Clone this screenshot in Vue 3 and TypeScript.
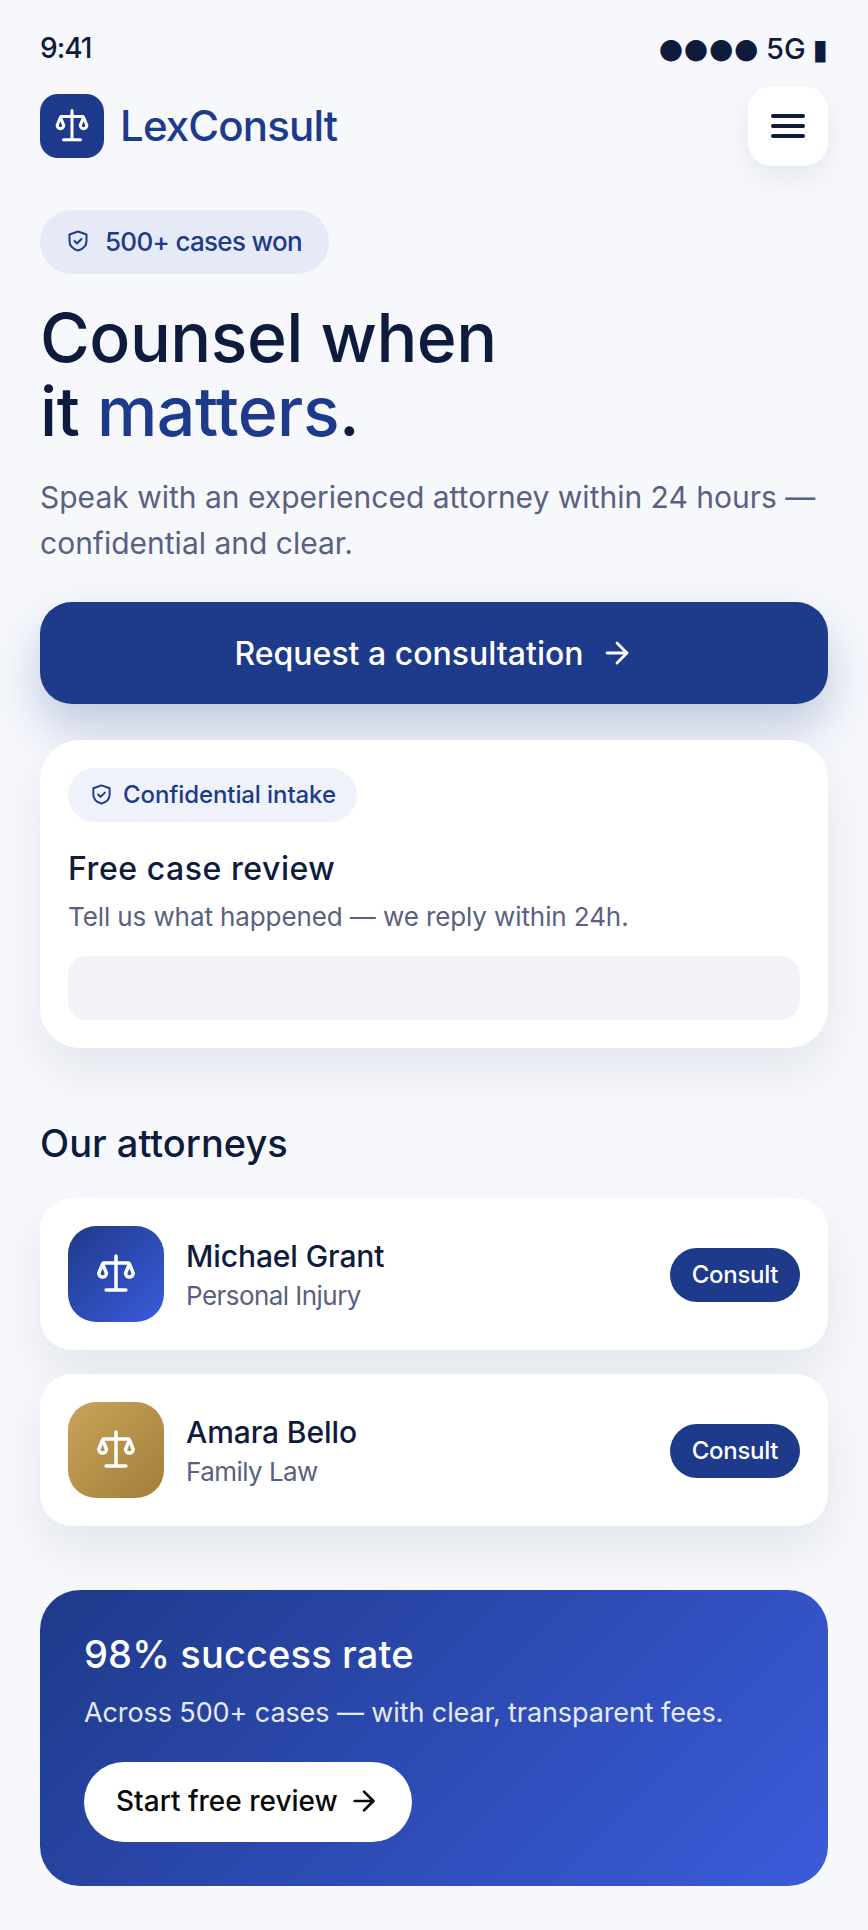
<script setup lang="ts">
interface Attorney {
  name: string
  area: string
  tone: string
}

const attorneys: Attorney[] = [
  { name: 'Michael Grant', area: 'Personal Injury', tone: 'blue' },
  { name: 'Amara Bello', area: 'Family Law', tone: 'gold' },
]

const scalePath =
  'M12 2.2v18.5M6.6 20.7h10.8M5 6h14M4.7 6.5 2.6 11.6a2.1 2.1 0 0 0 4.2 0ZM19.3 6.5l-2.1 5.1a2.1 2.1 0 0 0 4.2 0Z'
const shieldPath = 'M12 2.5 20.5 5.5V12c0 5-3.5 8-8.5 9.5C7 20 3.5 17 3.5 12V5.5Z'
</script>

<template>
  <div class="page">
    <div class="status">
      <span class="time">9:41</span>
      <span class="signal"><span class="dots">●●●●</span><span class="net">5G</span><span class="batt">▮</span></span>
    </div>

    <header class="top">
      <div class="brand">
        <span class="logo">
          <svg class="scale" width="38" height="38" viewBox="0 0 24 24"><path :d="scalePath" /></svg>
        </span>
        <span class="brand-name">LexConsult</span>
      </div>
      <button class="menu"><span></span><span></span><span></span></button>
    </header>

    <div class="badge">
      <svg class="shield" width="24" height="24" viewBox="0 0 24 24"><path :d="shieldPath" /><path d="m8.5 12 2.5 2.5 4.5-4.5" /></svg>
      500+ cases won
    </div>

    <h1>Counsel when<br />it <em>matters</em>.</h1>
    <p class="lead">Speak with an experienced attorney within 24 hours — confidential and clear.</p>

    <button class="cta">
      Request a consultation
      <svg class="arrow" width="34" height="34" viewBox="0 0 24 24"><path d="M5 12h14" /><path d="m12 5 7 7-7 7" /></svg>
    </button>

    <section class="card review">
      <div class="tag">
        <svg class="shield" width="23" height="23" viewBox="0 0 24 24"><path :d="shieldPath" /><path d="m8.5 12 2.5 2.5 4.5-4.5" /></svg>
        Confidential intake
      </div>
      <h3>Free case review</h3>
      <p>Tell us what happened — we reply within 24h.</p>
      <div class="field"></div>
    </section>

    <h2>Our attorneys</h2>

    <div class="list">
      <div v-for="a in attorneys" :key="a.name" class="card row">
        <span class="avatar" :class="a.tone">
          <svg class="scale" width="44" height="44" viewBox="0 0 24 24"><path :d="scalePath" /></svg>
        </span>
        <div class="who">
          <div class="name">{{ a.name }}</div>
          <div class="area">{{ a.area }}</div>
        </div>
        <button class="consult">Consult</button>
      </div>
    </div>

    <section class="promo">
      <h3>98% success rate</h3>
      <p>Across 500+ cases — with clear, transparent fees.</p>
      <button class="start">
        Start free review
        <svg class="arrow" width="32" height="32" viewBox="0 0 24 24"><path d="M5 12h14" /><path d="m12 5 7 7-7 7" /></svg>
      </button>
    </section>
  </div>
</template>

<style>
body {
  background: #f6f8fc;
}
</style>

<style scoped>
.page {
  box-sizing: border-box;
  width: 868px;
  height: 1930px;
  padding: 27px 40px 0;
  background: #f6f8fc;
  color: #0f1b3d;
  font-family: Inter, "DejaVu Sans", sans-serif;
  overflow: hidden;
}

button {
  border: 0;
  font-family: inherit;
}

.status {
  display: flex;
  justify-content: space-between;
  align-items: center;
  height: 42px;
  font-size: 28px;
  line-height: 42px;
  font-weight: 500;
}

.time {
  letter-spacing: -1px;
}

.signal {
  display: flex;
  align-items: center;
  gap: 7px;
  font-size: 29px;
}

.dots,
.batt {
  font-family: "DejaVu Sans", sans-serif;
  font-size: 28px;
}

.dots {
  margin-top: 2px;
  letter-spacing: 0.6px;
}

.batt {
  margin-top: 4px;
}

.net {
  margin-top: 2px;
}

.top {
  display: flex;
  justify-content: space-between;
  align-items: center;
  margin-top: 17px;
}

.brand {
  display: flex;
  align-items: center;
  gap: 16px;
}

.logo {
  display: flex;
  align-items: center;
  justify-content: center;
  width: 64px;
  height: 64px;
  border-radius: 18px;
  background: #1e3a8a;
}

.scale {
  fill: none;
  stroke: #fff;
  stroke-width: 1.9;
  stroke-linecap: round;
  stroke-linejoin: round;
}

.brand-name {
  padding-bottom: 2px;
  color: #1e3a8a;
  font-size: 42px;
  font-weight: 500;
  letter-spacing: -0.85px;
}

.menu {
  display: flex;
  flex-direction: column;
  align-items: center;
  justify-content: center;
  gap: 6px;
  width: 80px;
  height: 80px;
  border-radius: 24px;
  background: #fff;
  box-shadow: 0 12px 28px rgba(15, 27, 61, 0.07);
}

.menu span {
  width: 34px;
  height: 4px;
  border-radius: 2px;
  background: #0f1b3d;
}

.badge {
  display: inline-flex;
  align-items: center;
  gap: 15px;
  box-sizing: border-box;
  height: 64px;
  margin-top: 44px;
  padding: 0 27px 2px 26px;
  border-radius: 32px;
  background: #e6eaf7;
  color: #1e3a8a;
  font-size: 26px;
  font-weight: 500;
  letter-spacing: -0.7px;
}

.shield {
  fill: none;
  stroke: #1e3a8a;
  stroke-width: 2;
  stroke-linecap: round;
  stroke-linejoin: round;
}

h1 {
  margin: 26px 0 0;
  font-size: 68px;
  line-height: 74px;
  font-weight: 550;
  letter-spacing: -0.5px;
}

h1 em {
  color: #1e3a8a;
  font-style: normal;
}

.lead {
  margin: 26px 0 0;
  color: #5a6080;
  font-size: 30px;
  line-height: 46px;
}

.cta {
  display: flex;
  align-items: center;
  justify-content: center;
  gap: 16px;
  width: 100%;
  height: 102px;
  margin-top: 36px;
  border-radius: 32px;
  background: #1e3a8a;
  color: #fff;
  font-size: 32px;
  font-weight: 500;
  box-shadow: 0 24px 48px rgba(30, 58, 138, 0.25);
}

.arrow {
  fill: none;
  stroke: currentColor;
  stroke-width: 2;
  stroke-linecap: round;
  stroke-linejoin: round;
}

.card {
  background: #fff;
  box-shadow: 0 24px 48px rgba(15, 27, 61, 0.08);
}

.review {
  box-sizing: border-box;
  height: 308px;
  margin-top: 36px;
  padding: 28px;
  border-radius: 40px;
}

.tag {
  display: inline-flex;
  align-items: center;
  gap: 10px;
  box-sizing: border-box;
  height: 54px;
  padding: 0 21px 2px 22px;
  border-radius: 27px;
  background: #eff2fb;
  color: #1e3a8a;
  font-size: 24px;
  font-weight: 500;
  letter-spacing: -0.1px;
}

.review h3 {
  margin: 25px 0 0;
  font-size: 32px;
  line-height: 44px;
  font-weight: 500;
  letter-spacing: 0.55px;
}

.review p {
  margin: 5px 0 0;
  color: #5a6080;
  font-size: 26px;
  line-height: 42px;
  letter-spacing: -0.1px;
}

.field {
  height: 64px;
  margin-top: 18px;
  border-radius: 20px;
  background: #f1f3f8;
}

h2 {
  margin: 71px 0 0;
  font-size: 38px;
  line-height: 48px;
  font-weight: 500;
}

.list {
  display: flex;
  flex-direction: column;
  gap: 24px;
  margin-top: 31px;
}

.row {
  display: flex;
  align-items: center;
  gap: 22px;
  height: 152px;
  padding: 0 28px;
  border-radius: 32px;
  box-sizing: border-box;
}

.avatar {
  display: flex;
  align-items: center;
  justify-content: center;
  width: 96px;
  height: 96px;
  border-radius: 28px;
}

.avatar.blue {
  background: linear-gradient(135deg, #1e3a8a, #3b5bdb);
}

.avatar.gold {
  background: linear-gradient(135deg, #c9a35a, #a17f3a);
}

.who {
  flex: 1;
  padding-top: 2px;
}

.name {
  font-size: 30px;
  line-height: 40px;
  font-weight: 500;
  letter-spacing: -0.1px;
}

.area {
  margin-top: 1px;
  color: #5a6080;
  font-size: 26px;
  line-height: 38px;
  letter-spacing: -0.55px;
}

.consult {
  height: 54px;
  width: 130px;
  margin-top: 1px;
  padding-bottom: 2px;
  border-radius: 27px;
  background: #1e3a8a;
  color: #fff;
  font-size: 24px;
  font-weight: 500;
  letter-spacing: -0.3px;
}

.promo {
  box-sizing: border-box;
  height: 296px;
  margin-top: 64px;
  padding: 39px 44px;
  border-radius: 40px;
  background: linear-gradient(135deg, #1e3a8a, #3b5bdb);
  color: #fff;
}

.promo h3 {
  margin: 0;
  font-size: 38px;
  line-height: 50px;
  font-weight: 500;
  letter-spacing: 0.15px;
}

.promo p {
  margin: 13px 0 0;
  color: #e6eaf7;
  font-size: 27px;
  line-height: 42px;
  letter-spacing: -0.1px;
}

.start {
  display: flex;
  align-items: center;
  gap: 10px;
  height: 80px;
  margin-top: 28px;
  padding: 0 32px 2px;
  border-radius: 40px;
  background: #fff;
  color: #0a0a0a;
  font-size: 28px;
  font-weight: 500;
}
</style>
